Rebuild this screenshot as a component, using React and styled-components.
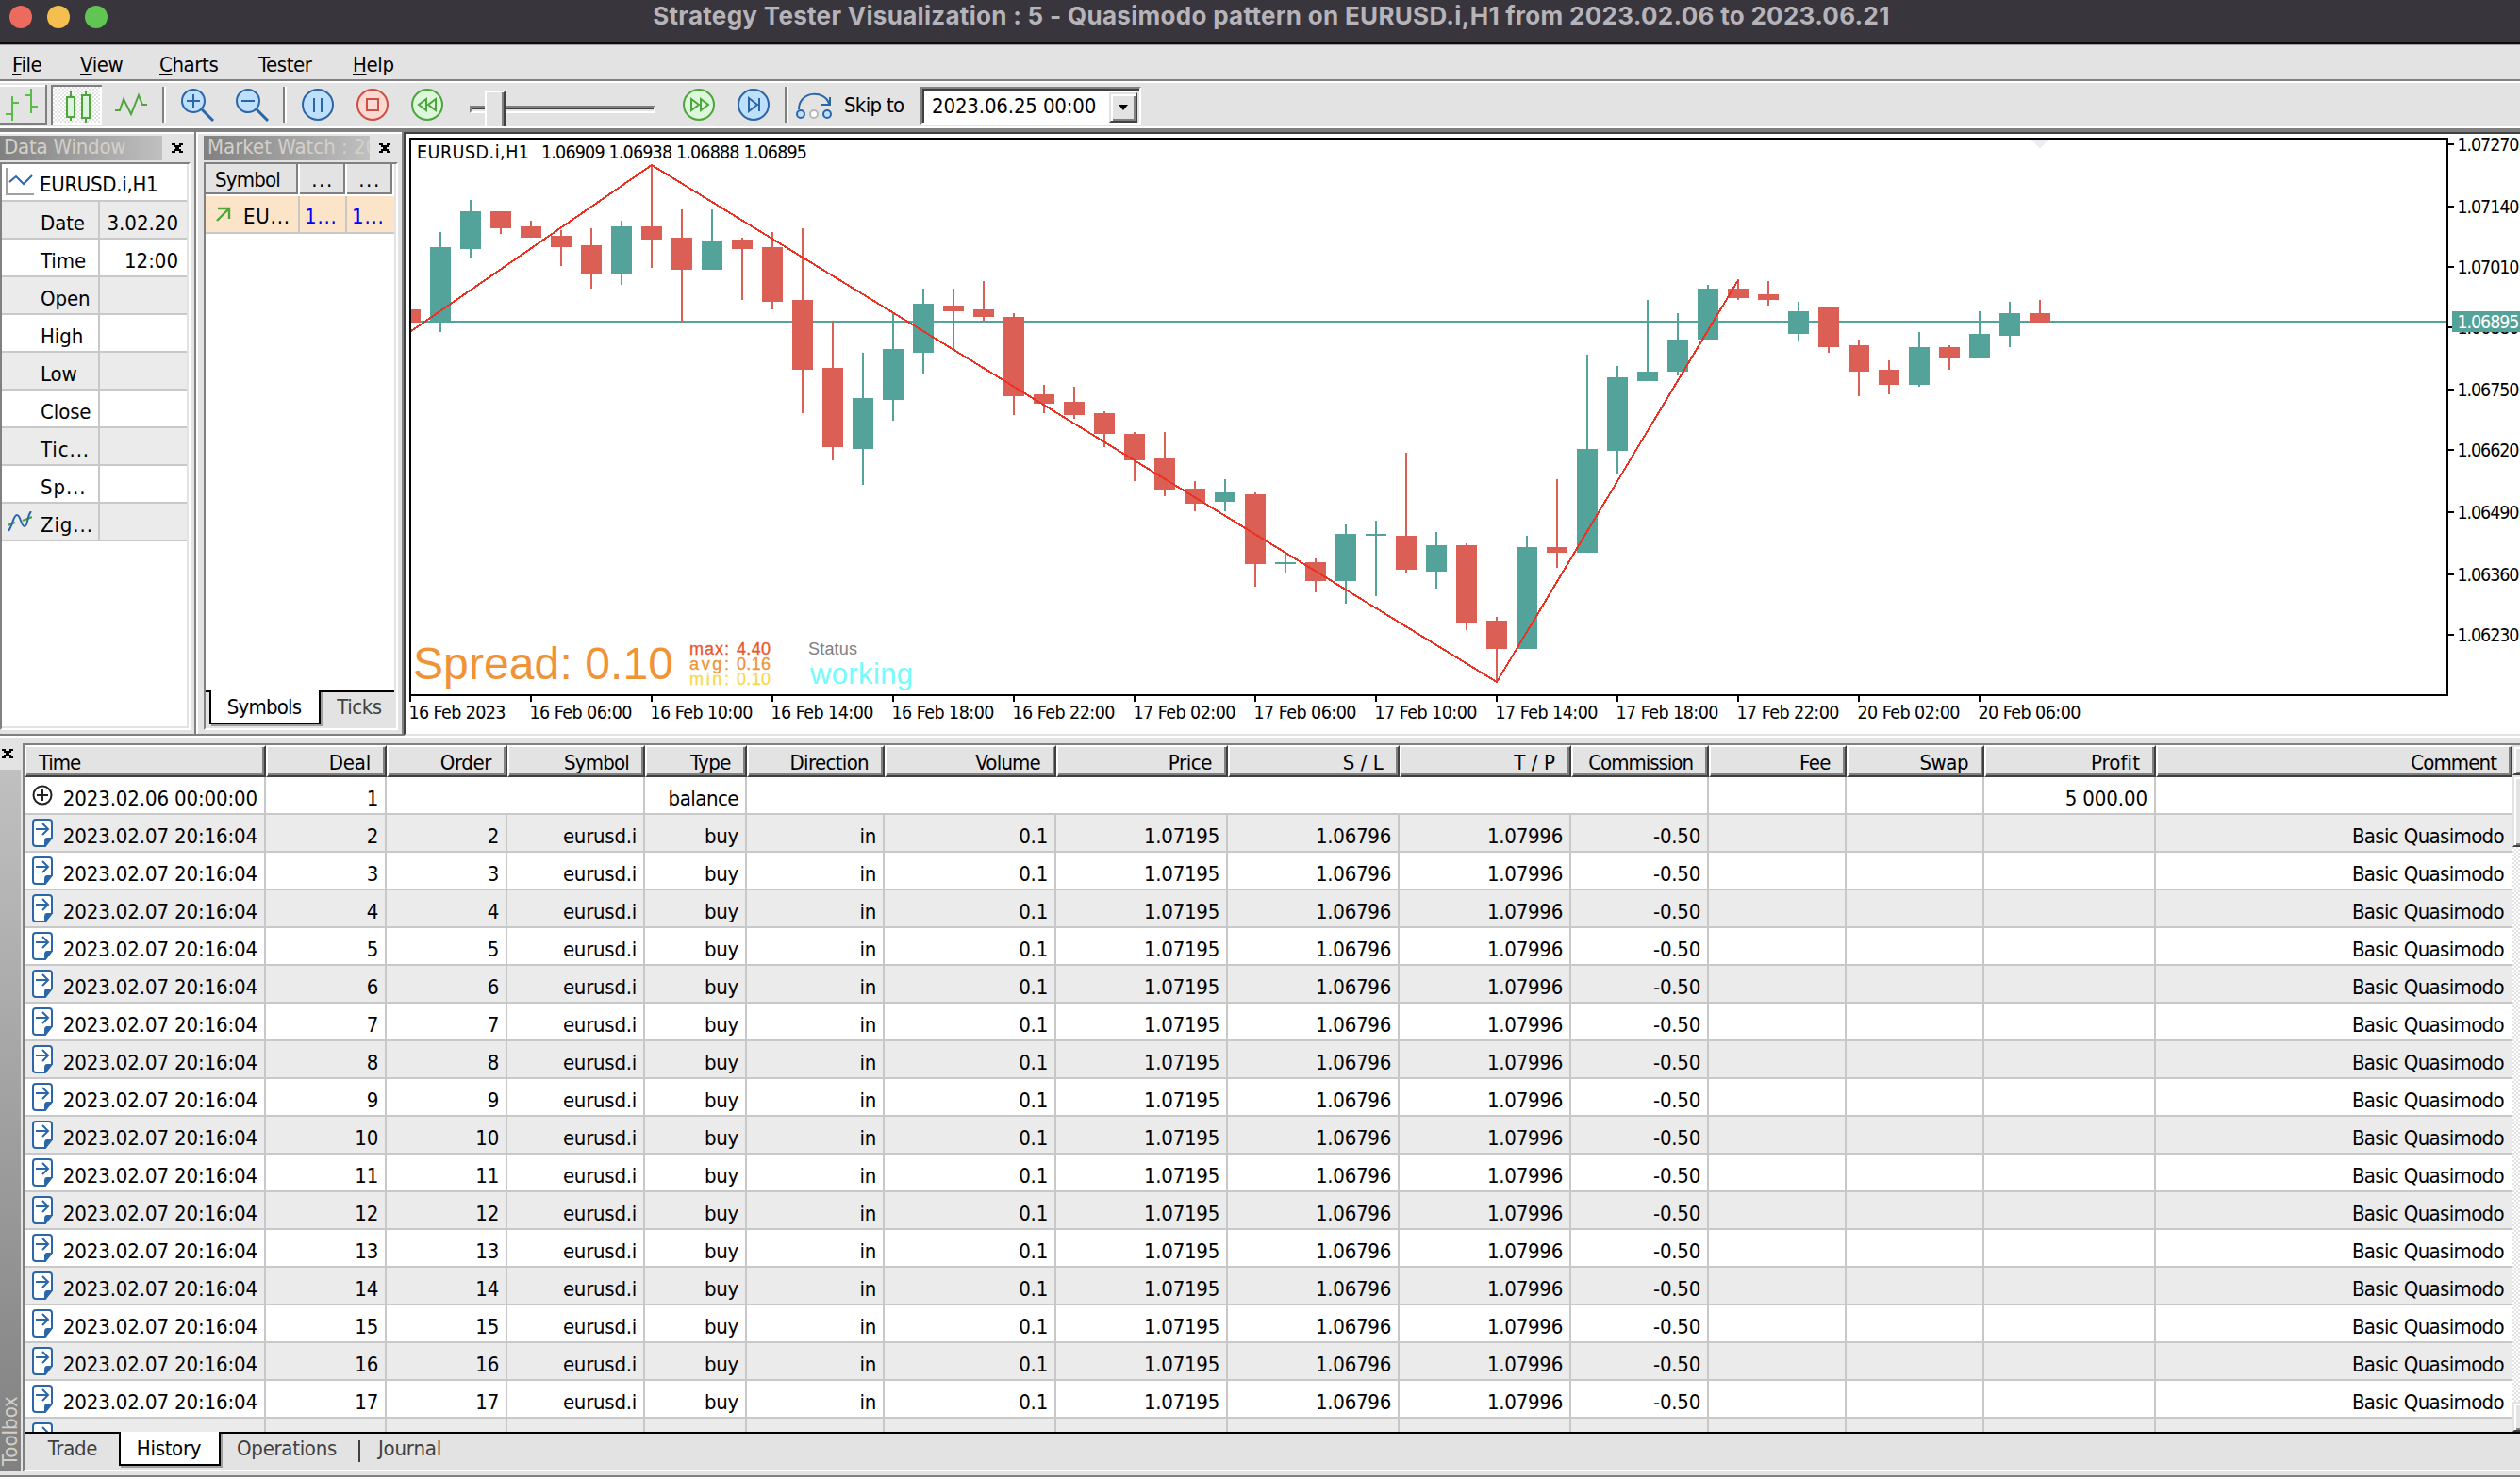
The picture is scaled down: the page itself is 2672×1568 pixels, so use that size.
import React from 'react'
import styled, { createGlobalStyle, css } from 'styled-components'

const UI_FONT = "'DejaVu Sans Condensed', 'DejaVu Sans', 'Liberation Sans', sans-serif"

const face = '#e3e3e3'
const gray = '#808080'
const dark = '#404040'
const line = '#c8c8c8'
const bull = '#54a39a'
const bear = '#dc5f56'

const GlobalStyle = createGlobalStyle`
  * { box-sizing: border-box; }
  body {
    margin: 0;
    background: ${face};
    font-family: ${UI_FONT};
    font-stretch: condensed;
    font-size: 22px;
    color: #000;
    overflow: hidden;
  }
  svg { display: block; }
`

const checker = css`
  background: repeating-conic-gradient(#fff 0 25%, ${face} 0 50%) 0 0 / 4px 4px;
`

const Window = styled.div`
  width: 2672px;
  height: 1568px;
  display: flex;
  flex-direction: column;
  overflow: hidden;
  white-space: nowrap;
`

const TitleBar = styled.header`
  height: 48px;
  flex: none;
  display: grid;
  grid-template-columns: 1fr auto 1fr;
  padding: 0 10px;
  background: #38353d;
  border-bottom: 1px solid #a0a0a0;
  box-shadow: inset 0 -3px 0 #0c0b0d;
`

const Lights = styled.div`
  display: flex;
  gap: 16px;
  padding-top: 6px;
`

const Light = styled.span`
  width: 24px;
  height: 24px;
  border-radius: 50%;
  background: ${p => p.$color};
`

const Title = styled.h1`
  margin: 0 0 0 24px;
  font: 700 26px/34px Inter, 'Liberation Sans', sans-serif;
  letter-spacing: 0.3px;
  color: #b6b3b9;
`

const MenuBar = styled.nav`
  height: 40px;
  flex: none;
  background: ${face};
  border-bottom: 2px solid #fff;
  box-shadow: inset 0 -2px 0 ${gray};
  display: flex;
  padding-left: 13px;
`

const MenuItem = styled.span`
  width: ${p => p.$width}px;
  line-height: 41px;
  letter-spacing: -0.4px;
`

const MenuText = styled.span`
  display: inline-block;
  &::first-letter {
    text-decoration: ${p => (p.$plain ? 'none' : 'underline')};
    text-decoration-thickness: 2px;
    text-underline-offset: 2px;
  }
`

const Toolbar = styled.div`
  height: 48px;
  flex: none;
  display: flex;
  background: ${face};
  border-bottom: 2px solid #fff;
  padding-top: 2px;
`

const Tool = styled.div`
  width: 54px;
  height: 42px;
  flex: none;
  margin-right: 4px;
  ${p => p.$raised && css`
    margin-left: -4px;
    box-shadow: inset -2px -2px 0 ${gray}, inset 2px 2px 0 #fff;
  `}
  ${p => p.$pressed && css`
    ${checker}
    box-shadow: inset 2px 2px 0 ${gray}, inset -2px -2px 0 #fff;
  `}
`

const Separator = styled.i`
  width: 4px;
  height: 38px;
  flex: none;
  margin: 2px ${p => p.$after || 0}px 0 ${p => p.$before || 0}px;
  border-left: 2px solid ${gray};
  border-right: 2px solid #fff;
`

const Slider = styled.div`
  position: relative;
  width: 197px;
  height: 44px;
  margin: 0 19px 0 14px;
  flex: none;
`

const Track = styled.div`
  height: 8px;
  margin-top: 22px;
  border: 2px solid ${gray};
  border-bottom-color: #fff;
  border-right-color: #fff;
  box-shadow: inset 0 2px 0 ${dark};
`

const Thumb = styled.div`
  position: absolute;
  left: 16px;
  top: 6px;
  width: 22px;
  height: 38px;
  background: ${face};
  border: 2px solid #fff;
  border-bottom: 0;
  border-right-color: ${dark};
  box-shadow: inset -2px 0 0 ${gray};
`

const SkipLabel = styled.span`
  width: 81px;
  margin-left: 1px;
  line-height: 44px;
  letter-spacing: -0.7px;
`

const Combo = styled.div`
  display: flex;
  justify-content: space-between;
  width: 234px;
  height: 40px;
  margin-top: 2px;
  background: #fff;
  border: 2px solid ${gray};
  border-right-color: #fff;
  border-bottom-color: #fff;
  box-shadow: inset 2px 2px 0 ${dark}, inset -2px 0 0 ${face};
  padding: 2px 2px 0 10px;
  line-height: 33px;
  letter-spacing: -0.15px;
`

const ComboButton = styled.div`
  width: 30px;
  height: 32px;
  margin-top: 2px;
  background: ${face};
  border: 2px solid ${face};
  border-right-color: ${dark};
  border-bottom-color: ${dark};
  box-shadow: inset 2px 2px 0 #fff, inset -2px -2px 0 ${gray};
  display: flex;
  align-items: center;
  justify-content: center;
`

const Workspace = styled.div`
  height: 644px;
  flex: none;
  display: flex;
  border-top: 4px solid ${gray};
`

const Panel = styled.section`
  width: ${p => p.$width}px;
  flex: none;
  background: ${face};
  border: 0 solid ${gray};
  border-width: 0 2px 2px 0;
  box-shadow: inset 0 2px 0 #fff, inset ${p => (p.$inset ? 2 : 0)}px 0 0 #fff;
  padding: 4px 4px 4px ${p => (p.$inset ? 8 : 0)}px;
`

const PanelHead = styled.div`
  height: 28px;
  display: flex;
`

const Caption = styled.div`
  width: ${p => p.$width}px;
  height: 26px;
  overflow: hidden;
  padding-left: 4px;
  background: linear-gradient(90deg, #808080, #c0c0c0);
  color: #d4d0c8;
  line-height: 24px;
  letter-spacing: ${p => p.$spacing}px;
`

const CloseBox = styled.div`
  padding: 8px 0 0 10px;
`

const Sunken = styled.div`
  height: 602px;
  display: flex;
  flex-direction: column;
  background: #fff;
  border: 2px solid ${gray};
  border-right-color: #fff;
  border-bottom-color: #fff;
  box-shadow: inset -2px -2px 0 ${face};
  padding: 0 2px 2px 0;
`

const DataRow = styled.div`
  display: grid;
  grid-template-columns: 41px 61px 1fr;
  height: 40px;
  flex: none;
  overflow: hidden;
  border-bottom: 2px solid ${line};
  background: ${p => (p.$shade ? '#ebebeb' : '#fff')};
  line-height: 45px;
`

const DataTitle = styled(DataRow)`
  grid-template-columns: 40px 1fr;
  line-height: 44px;
  letter-spacing: -0.3px;
`

const DataLabel = styled.span`
  letter-spacing: ${p => (p.$cut ? 0.9 : -0.1)}px;
`

const DataValue = styled.span`
  border-left: 2px solid ${line};
  padding-right: 9px;
  text-align: right;
`

const TitleIcon = styled.div`
  width: 30px;
  height: 29px;
  margin: 4px 0 0 4px;
  border-left: 2px solid #a0a0a0;
  border-bottom: 2px solid #a0a0a0;
`

const RowIcon = styled.div`
  padding: 8px 0 0 6px;
`

const WatchHead = styled.div`
  display: grid;
  grid-template-columns: 98px 48px 48px;
  gap: 2px;
  height: 34px;
  flex: none;
  background: #fff;
  padding-bottom: 2px;
  line-height: 33px;
  margin-right: 2px;
`

const WatchHeadCell = styled.span`
  background: ${face};
  border-right: 2px solid ${gray};
  border-bottom: 2px solid ${gray};
  text-align: ${p => (p.$first ? 'left' : 'center')};
  padding-left: ${p => (p.$first ? 10 : 2)}px;
  letter-spacing: ${p => (p.$first ? -0.8 : 1.5)}px;
  overflow: hidden;
`

const WatchRow = styled.div`
  display: grid;
  grid-template-columns: 40px 58px 50px 1fr;
  height: 40px;
  flex: none;
  background: #fce4c9;
  border-bottom: 2px solid ${line};
  line-height: 44px;
  letter-spacing: 0.8px;
  overflow: hidden;
`

const Quote = styled.span`
  color: #0000ff;
  border-left: 2px solid ${line};
  padding-left: 5px;
`

const TabStrip = styled.div`
  display: flex;
  height: ${p => p.$height}px;
  margin-top: auto;
  flex: none;
  background: ${face};
  box-shadow: inset 0 2px 0 #000;
  padding-left: ${p => p.$indent}px;
  line-height: 36px;
`

const Tab = styled.span`
  width: ${p => p.$width}px;
  height: 36px;
  flex: none;
  padding-right: ${p => p.$shift || 0}px;
  text-align: center;
  letter-spacing: ${p => p.$spacing || 0}px;
  color: ${dark};
  ${p => p.$active && css`
    color: #000;
    background: #fff;
    border: 2px solid #000;
    border-top: 0;
    box-shadow: 2px 2px 0 #a0a0a0;
  `}
`

const TabDivider = styled.i`
  width: 2px;
  height: 23px;
  margin: 9px 0 0 6px;
  background: ${dark};
`

const ChartPane = styled.main`
  flex: 1;
  background: #fff;
  border-left: 2px solid ${dark};
  border-top: 2px solid ${dark};
  border-bottom: 2px solid ${face};
`

const ChartText = styled.text`
  font-family: ${UI_FONT};
  font-stretch: condensed;
  font-size: 19.5px;
  fill: ${p => p.$color || '#000'};
`

const OverlayText = styled.text`
  font-family: 'Liberation Sans', Arial, sans-serif;
  font-size: ${p => p.$size}px;
  fill: ${p => p.$color};
`

const Toolbox = styled.section`
  flex: 1;
  display: flex;
  background: ${face};
  border-top: 2px solid #fff;
  border-bottom: 2px solid #fff;
  box-shadow: inset 0 -2px 0 ${gray};
  padding: 6px 0;
`

const ToolboxSide = styled.div`
  width: 24px;
  height: 772px;
  flex: none;
  display: flex;
  flex-direction: column;
`

const SideClose = styled.div`
  height: 28px;
  padding: 6px 0 0 2px;
`

/* rotated by half a turn so that the caption reads upwards */
const SideCaption = styled.div`
  flex: 1;
  width: 22px;
  background: linear-gradient(#808080, #c0c0c0);
  color: #d4d0c8;
  writing-mode: vertical-rl;
  transform: rotate(180deg);
  line-height: 22px;
  padding-top: 6px;
`

const Sheet = styled.div`
  flex: 1;
  height: 772px;
  display: flex;
  flex-direction: column;
  border-left: 2px solid ${gray};
  border-top: 2px solid ${gray};
  border-bottom: 2px solid #fff;
`

const SheetBody = styled.div`
  height: 728px;
  display: flex;
  overflow: hidden;
`

const columns = '256px 128px 128px 146px 108px 146px 182px 182px 182px 182px 146px 146px 146px 182px 378px'

const Table = styled.div`
  width: 2638px;
  flex: none;
`

const HeadRow = styled.div`
  display: grid;
  grid-template-columns: ${columns};
  height: 34px;
  line-height: 33px;
`

const HeadCell = styled.span`
  background: ${face};
  border: 2px solid #fff;
  border-right-color: ${dark};
  border-bottom-color: ${dark};
  box-shadow: inset -2px -2px 0 ${gray};
  text-align: ${p => (p.$left ? 'left' : 'right')};
  padding: 0 15px 0 13px;
  overflow: hidden;
  letter-spacing: ${p => p.$spacing}px;
`

const Row = styled.div`
  display: grid;
  grid-template-columns: ${columns};
  height: 40px;
  background: ${p => (p.$shade ? '#ebebeb' : '#fff')};
  border-bottom: 2px solid ${line};
  line-height: 45px;
  overflow: hidden;
`

const Cell = styled.span`
  grid-column: span ${p => p.$span || 1};
  border-right: ${p => (p.$last ? 0 : 2)}px solid ${line};
  padding-right: ${p => (p.$last ? 9 : 7)}px;
  text-align: right;
  letter-spacing: ${p => p.$spacing || -0.25}px;
  height: 38px;
`

const TimeCell = styled(Cell)`
  display: flex;
  justify-content: space-between;
  padding-left: 8px;
  svg { margin-top: ${p => p.$iconTop}px; }
`

const Scrollbar = styled.div`
  flex: 1;
  display: flex;
  flex-direction: column;
  ${checker}
`

const ScrollPart = styled.div`
  height: ${p => p.$height}px;
  margin-top: ${p => p.$top || 0};
  flex: none;
  background: ${face};
  border-left: 2px solid ${face};
  border-top: 2px solid ${face};
  border-bottom: 2px solid ${dark};
  box-shadow: inset 2px 2px 0 #fff, inset 0 -2px 0 ${gray};
`

const blue = '#2b66a8'
const green = '#4da63a'

const ToolSvg = ({ children }) => (
  <svg width="54" height="42" viewBox="0 0 54 42" fill="none" strokeWidth="2">{children}</svg>
)

const Round = ({ stroke, fill, children }) => (
  <ToolSvg>
    <circle cx="27" cy="21" r="16" stroke={stroke} fill={fill} />
    <g stroke={stroke}>{children}</g>
  </ToolSvg>
)

const Magnifier = ({ plus }) => (
  <ToolSvg>
    <g stroke={blue}>
      <circle cx="27" cy="17" r="12" fill="#bfe0fc" />
      <path d={plus ? 'M20 17H34M27 10V24' : 'M20 17H34'} />
      <path d="M36 26L48 38" strokeWidth="3" />
    </g>
  </ToolSvg>
)

const CloseIcon = () => (
  <svg width="12" height="10" viewBox="0 0 12 10" shapeRendering="crispEdges">
    <path d="M0 0h4v2h4V0h4v2h-2v2H8v2h2v2h2v2H8V8H4v2H0V8h2V6h2V4H2V2H0z" />
  </svg>
)

const DealIcon = () => (
  <svg width="22" height="30" viewBox="0 0 22 30" fill="none" stroke={blue} strokeWidth="2">
    <path d="M4 1H18Q21 1 21 4V20L14 29H4Q1 29 1 26V4Q1 1 4 1Z" fill="#fff" />
    <path d="M20 21H16Q14 21 14 24V28Z" fill={blue} />
    <path d="M4 11H17M11 5L17 11L11 17" />
  </svg>
)

const BalanceIcon = () => (
  <svg width="22" height="22" viewBox="0 0 22 22" fill="none" stroke="#222" strokeWidth="2">
    <circle cx="11" cy="11" r="9.5" />
    <path d="M5 11H17M11 5V17" />
  </svg>
)

// [high, body top, body bottom, low, rising]
const candles = [
  [328, 328, 342, 342, 0], [246, 262, 342, 352, 1], [212, 224, 264, 274, 1], [224, 224, 242, 248, 0],
  [234, 240, 252, 252, 0], [244, 250, 262, 282, 0], [242, 260, 290, 306, 0], [234, 240, 290, 302, 1],
  [174, 240, 254, 284, 0], [222, 252, 286, 342, 0], [222, 256, 286, 286, 1], [252, 254, 264, 318, 0],
  [246, 262, 320, 328, 0], [242, 318, 392, 438, 0], [340, 390, 474, 488, 0], [374, 422, 476, 514, 1],
  [332, 370, 424, 446, 1], [306, 322, 374, 396, 1], [306, 324, 330, 370, 0], [298, 328, 336, 340, 0],
  [332, 336, 420, 440, 0], [408, 418, 428, 438, 0], [410, 426, 440, 444, 0], [436, 438, 460, 474, 0],
  [458, 460, 488, 510, 0], [458, 486, 520, 526, 0], [510, 518, 534, 542, 0], [508, 522, 532, 542, 1],
  [522, 524, 598, 622, 0], [586, 596, 598, 608, 1], [592, 596, 616, 628, 0], [556, 566, 616, 640, 1],
  [552, 566, 568, 632, 1], [480, 568, 604, 608, 0], [564, 578, 606, 624, 1], [576, 578, 660, 668, 0],
  [654, 658, 688, 724, 0], [568, 580, 688, 688, 1], [508, 580, 586, 602, 0], [376, 476, 586, 586, 1],
  [388, 400, 478, 502, 1], [318, 394, 404, 404, 1], [332, 360, 394, 398, 1], [302, 306, 360, 360, 1],
  [296, 306, 316, 318, 0], [298, 312, 318, 324, 0], [320, 330, 354, 362, 1], [326, 326, 368, 374, 0],
  [360, 366, 394, 420, 0], [382, 392, 408, 418, 0], [352, 368, 408, 410, 1], [366, 368, 380, 392, 0],
  [330, 354, 380, 380, 1], [320, 332, 356, 368, 1], [318, 332, 342, 342, 0]
]

const times = [
  '16 Feb 2023', '16 Feb 06:00', '16 Feb 10:00', '16 Feb 14:00', '16 Feb 18:00', '16 Feb 22:00', '17 Feb 02:00',
  '17 Feb 06:00', '17 Feb 10:00', '17 Feb 14:00', '17 Feb 18:00', '17 Feb 22:00', '20 Feb 02:00', '20 Feb 06:00'
]

const prices = [
  ['1.07270', 152], ['1.07140', 218], ['1.07010', 282], ['1.06880', 346], ['1.06750', 412],
  ['1.06620', 476], ['1.06490', 542], ['1.06360', 608], ['1.06230', 672]
]

const spreads = [['max:', '4.40', 694, '#eb5528'], ['avg:', '0.16', 710, '#f09337'], ['min:', '0.10', 726, '#f8d948']]

const Chart = () => (
  <svg width="2242" height="636" viewBox="430 142 2242 636">
    <clipPath id="plot"><rect x="436" y="148" width="2158" height="588" /></clipPath>
    <g shapeRendering="crispEdges">
      <g clipPath="url(#plot)">
        <path d="M2154 148H2172L2163 158Z" fill="#efedf1" />
        <rect x="436" y="340" width="2158" height="2" fill={bull} />
        {candles.map(([high, top, bottom, low, up], i) => (
          <g key={i} fill={up ? bull : bear}>
            <rect x={434 + 32 * i} y={high} width="2" height={low - high} />
            <rect x={424 + 32 * i} y={top} width="22" height={bottom - top} />
          </g>
        ))}
        <path d="M436 351L691 175L1587 723L1843 297" fill="none" stroke="#eb3323" strokeWidth="2" />
      </g>
      <rect x="435" y="147" width="2160" height="590" fill="none" stroke="#000" strokeWidth="2" />
      {times.map((t, i) => <rect key={t} x={434 + 128 * i} y="738" width="2" height="6" />)}
      {prices.map(([p, y]) => <rect key={p} x="2596" y={y} width="6" height="2" />)}
    </g>
    {times.map((t, i) => (
      <ChartText key={t} x={433.5 + 128 * i} y="762" textLength={i ? 109 : 103}>{t}</ChartText>
    ))}
    {prices.map(([p, y]) => <ChartText key={p} x="2605.5" y={y + 8} textLength="66">{p}</ChartText>)}
    <rect x="2600" y="330" width="72" height="22" fill={bull} />
    <ChartText x="2605.5" y="348" textLength="66" $color="#fff">1.06895</ChartText>
    <ChartText x="442" y="168" textLength="119">EURUSD.i,H1</ChartText>
    <ChartText x="574" y="168" textLength="282">1.06909 1.06938 1.06888 1.06895</ChartText>
    <OverlayText x="438" y="720" $size="48" $color="#f09337" textLength="276">Spread: 0.10</OverlayText>
    {spreads.map(([name, value, y, color]) => (
      <g key={name} stroke={color} strokeWidth="0.3">
        <OverlayText x="731" y={y} $size="18" $color={color} textLength="42">{name}</OverlayText>
        <OverlayText x="781" y={y} $size="18" $color={color} textLength="36">{value}</OverlayText>
      </g>
    ))}
    <OverlayText x="857" y="694" $size="18" $color="#808080" textLength="52">Status</OverlayText>
    <OverlayText x="859" y="725" $size="31" $color="#75fbfd" textLength="109">working</OverlayText>
  </svg>
)

// column title and its letter spacing
const heads = [
  ['Time', -1.1], ['Deal', -0.2], ['Order', -0.4], ['Symbol', -0.8], ['Type', -0.5], ['Direction', -0.65],
  ['Volume', -0.8], ['Price', -0.4], ['S / L', 0.1], ['T / P', 0.1], ['Commission', -1], ['Fee', -0.5],
  ['Swap', -0.5], ['Profit', 0.1], ['Comment', -0.9]
]

const deals = Array.from({ length: 17 }, (_, i) => i + 2)

const DealRow = ({ id }) => (
  <Row $shade={id % 2 === 0}>
    <TimeCell $iconTop={4} $spacing={-0.12}><DealIcon /><span>2023.02.07 20:16:04</span></TimeCell>
    <Cell>{id}</Cell>
    <Cell>{id}</Cell>
    <Cell>eurusd.i</Cell>
    <Cell>buy</Cell>
    <Cell>in</Cell>
    <Cell>0.1</Cell>
    <Cell>1.07195</Cell>
    <Cell>1.06796</Cell>
    <Cell>1.07996</Cell>
    <Cell>-0.50</Cell>
    <Cell />
    <Cell />
    <Cell />
    <Cell $last $spacing={-0.65}>Basic Quasimodo</Cell>
  </Row>
)

const fields = [
  ['Date', '3.02.20'], ['Time', '12:00'], ['Open'], ['High'], ['Low'], ['Close'], ['Tic...'], ['Sp...'], ['Zig...']
]

const App = () => (
  <>
    <GlobalStyle />
    <Window>
      <TitleBar>
        <Lights>
          <Light $color="#ed6a5e" />
          <Light $color="#f4bf4f" />
          <Light $color="#61c554" />
        </Lights>
        <Title>Strategy Tester Visualization : 5 - Quasimodo pattern on EURUSD.i,H1 from 2023.02.06 to 2023.06.21</Title>
      </TitleBar>
      <MenuBar>
        <MenuItem $width={72}><MenuText>File</MenuText></MenuItem>
        <MenuItem $width={84}><MenuText>View</MenuText></MenuItem>
        <MenuItem $width={105}><MenuText>Charts</MenuText></MenuItem>
        <MenuItem $width={100}><MenuText $plain>Tester</MenuText></MenuItem>
        <MenuItem $width={80}><MenuText>Help</MenuText></MenuItem>
      </MenuBar>
      <Toolbar>
        <Tool $raised>
          <ToolSvg><path d="M17 12V38M10 31H16M18 19H24M37 4V30M30 11H36M38 23H44" stroke="#57bd46" /></ToolSvg>
        </Tool>
        <Tool $pressed>
          <ToolSvg>
            <g stroke={green} fill="#dcf5dc">
              <path d="M21 7V38M37 6V40" />
              <rect x="17" y="13" width="8" height="21" />
              <rect x="33" y="11" width="8" height="24" />
            </g>
          </ToolSvg>
        </Tool>
        <Tool>
          <ToolSvg><path d="M10 27H15L19 15L27 31L35 11L39 21H44" stroke={green} /></ToolSvg>
        </Tool>
        <Separator $before={2} $after={2} />
        <Tool><Magnifier plus /></Tool>
        <Tool><Magnifier /></Tool>
        <Separator $before={6} $after={6} />
        <Tool><Round stroke={blue} fill="#bfe0fc"><path d="M23 14V29M31 14V29" /></Round></Tool>
        <Tool><Round stroke="#cf4f44" fill="#fbd9d3"><rect x="21" y="15" width="12" height="12" /></Round></Tool>
        <Tool><Round stroke={green} fill="#dcf7dc"><path d="M26 15V27L18 21ZM36 15V27L28 21Z" /></Round></Tool>
        <Slider>
          <Track />
          <Thumb />
        </Slider>
        <Tool><Round stroke={green} fill="#dcf7dc"><path d="M19 15V27L27 21ZM29 15V27L37 21Z" /></Round></Tool>
        <Tool><Round stroke={blue} fill="#bfe0fc"><path d="M22 14V28L31 21ZM33 14V28" /></Round></Tool>
        <Separator $before={2} />
        <Tool>
          <ToolSvg>
            <path d="M11 26C11 6 39 5 43 20M44 13V21H35" stroke={blue} />
            <circle cx="13" cy="31" r="4" stroke={blue} fill="#bfe0fc" />
            <circle cx="27" cy="31" r="4" stroke="#b8b8b8" fill="#fff" />
            <circle cx="41" cy="31" r="4" stroke={blue} fill="#bfe0fc" />
          </ToolSvg>
        </Tool>
        <SkipLabel>Skip to</SkipLabel>
        <Combo>
          2023.06.25 00:00
          <ComboButton>
            <svg width="10" height="6" viewBox="0 0 10 6"><path d="M0 0H10L5 6Z" /></svg>
          </ComboButton>
        </Combo>
      </Toolbar>
      <Workspace>
        <Panel $width={208}>
          <PanelHead>
            <Caption $width={172} $spacing={-0.2}>Data Window</Caption>
            <CloseBox><CloseIcon /></CloseBox>
          </PanelHead>
          <Sunken>
            <DataTitle>
              <TitleIcon>
                <svg width="28" height="22" viewBox="0 0 28 22" fill="none" stroke={blue} strokeWidth="2">
                  <path d="M2 15L9 9L17 17L26 8" />
                </svg>
              </TitleIcon>
              <span>EURUSD.i,H1</span>
            </DataTitle>
            {fields.map(([name, value], i) => (
              <DataRow key={name} $shade={i % 2 === 0}>
                <RowIcon>
                  {name === 'Zig...' && (
                    <svg width="26" height="22" viewBox="0 0 26 22" fill="none" strokeWidth="2.4">
                      <path d="M0 15L8 12M16 10L26 6" stroke={green} />
                      <path d="M1 21C6 14 6 4 10 4S14 16 18 16S20 6 25 0" stroke={blue} strokeWidth="2" />
                    </svg>
                  )}
                </RowIcon>
                <DataLabel $cut={name.endsWith('...')}>{name}</DataLabel>
                <DataValue>{value}</DataValue>
              </DataRow>
            ))}
          </Sunken>
        </Panel>
        <Panel $width={220} $inset>
          <PanelHead>
            <Caption $width={176} $spacing={0}>Market Watch : 2023.02.20</Caption>
            <CloseBox><CloseIcon /></CloseBox>
          </PanelHead>
          <Sunken>
            <WatchHead>
              <WatchHeadCell $first>Symbol</WatchHeadCell>
              <WatchHeadCell>...</WatchHeadCell>
              <WatchHeadCell>...</WatchHeadCell>
            </WatchHead>
            <WatchRow>
              <svg width="40" height="38" viewBox="0 0 40 38" fill="none" stroke={green} strokeWidth="2.4">
                <path d="M12 26L25 13M13 13H25V24" />
              </svg>
              <span>EU...</span>
              <Quote>1...</Quote>
              <Quote>1...</Quote>
            </WatchRow>
            <TabStrip $indent={4} $height={38}>
              <Tab $active $width={118} $spacing={-0.8} $shift={2}>Symbols</Tab>
              <Tab $width={82} $spacing={-0.4}>Ticks</Tab>
            </TabStrip>
          </Sunken>
        </Panel>
        <ChartPane><Chart /></ChartPane>
      </Workspace>
      <Toolbox>
        <ToolboxSide>
          <SideClose><CloseIcon /></SideClose>
          <SideCaption>Toolbox</SideCaption>
        </ToolboxSide>
        <Sheet>
          <SheetBody>
            <Table>
              <HeadRow>
                {heads.map(([h, spacing], i) => <HeadCell key={h} $left={i === 0} $spacing={spacing}>{h}</HeadCell>)}
              </HeadRow>
              <Row>
                <TimeCell $iconTop={8} $spacing={-0.12}><BalanceIcon /><span>2023.02.06 00:00:00</span></TimeCell>
                <Cell>1</Cell>
                <Cell $span={2} />
                <Cell $spacing={-0.5}>balance</Cell>
                <Cell $span={6} />
                <Cell />
                <Cell />
                <Cell $spacing={-0.1}>5 000.00</Cell>
                <Cell $last />
              </Row>
              {deals.map(id => <DealRow key={id} id={id} />)}
            </Table>
            <Scrollbar>
              <ScrollPart $height={32} />
              <ScrollPart $height={76} />
              <ScrollPart $height={32} $top="auto" />
            </Scrollbar>
          </SheetBody>
          <TabStrip $indent={22} $height={40}>
            <Tab $width={78} $spacing={-0.3} $shift={20}>Trade</Tab>
            <Tab $active $width={108} $spacing={-0.3} $shift={2}>History</Tab>
            <Tab $width={140} $spacing={-0.3}>Operations</Tab>
            <TabDivider />
            <Tab $width={106} $spacing={-0.2} $shift={1}>Journal</Tab>
          </TabStrip>
        </Sheet>
      </Toolbox>
    </Window>
  </>
)

export default App
